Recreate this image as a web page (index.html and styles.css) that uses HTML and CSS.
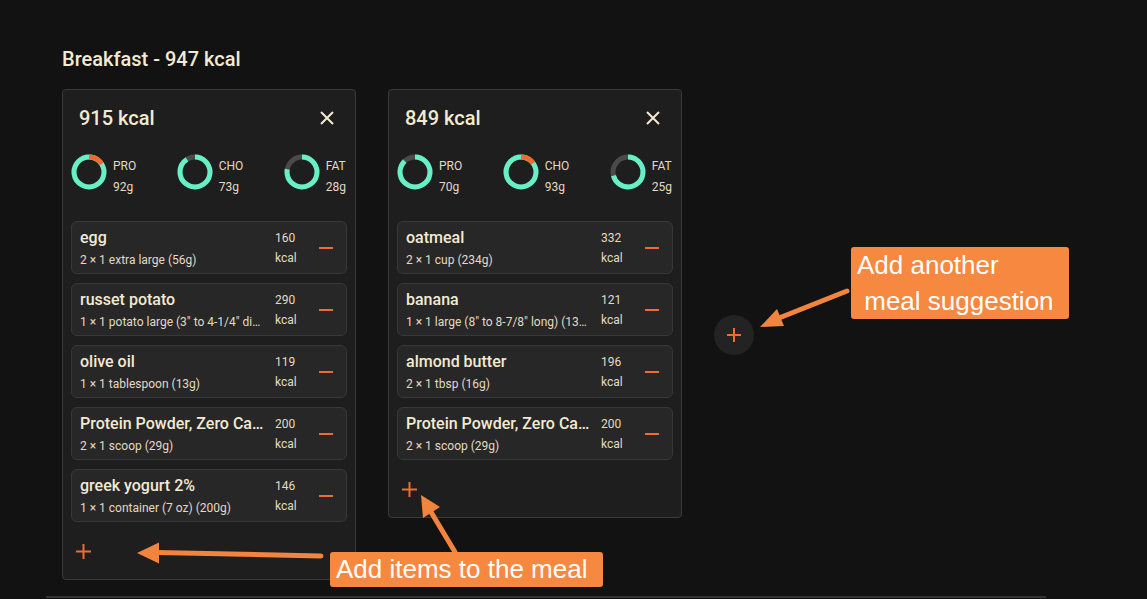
FILE: index.html
```html
<!DOCTYPE html>
<html lang="en">
<head>
    <meta charset="UTF-8">
    <meta name="viewport" content="width=device-width, initial-scale=1.0">
    <title>Meal Planner</title>
    <link rel="stylesheet" href="styles.css">
</head>
<body>
    <div class="page">
        <section class="meal-section">
            <h2 class="meal-title">Breakfast - 947 kcal</h2>

            <div class="suggestions">
                <!-- Suggestion 1 -->
                <div class="meal-card">
                    <div class="card-head">
                        <span class="card-kcal">915 kcal</span>
                        <button class="icon-btn" title="Remove suggestion">
                            <svg width="14" height="14" viewBox="0 0 14 14"><path d="M1 1L13 13M13 1L1 13" stroke="#f3ead3" stroke-width="2"/></svg>
                        </button>
                    </div>

                    <div class="macros">
                        <div class="macro">
                            <svg class="macro-ring" viewBox="0 0 36 36">
                                <circle class="ring-track" cx="18" cy="18" r="15" pathLength="100"/>
                                <circle class="ring-fill" cx="18" cy="18" r="15" pathLength="100" stroke-dasharray="100 100"/>
                                <circle class="ring-over" cx="18" cy="18" r="15" pathLength="100" stroke-dasharray="16 100"/>
                            </svg>
                            <div class="macro-text">PRO<br>92g</div>
                        </div>
                        <div class="macro">
                            <svg class="macro-ring" viewBox="0 0 36 36">
                                <circle class="ring-track" cx="18" cy="18" r="15" pathLength="100"/>
                                <circle class="ring-fill" cx="18" cy="18" r="15" pathLength="100" stroke-dasharray="91 100"/>
                            </svg>
                            <div class="macro-text">CHO<br>73g</div>
                        </div>
                        <div class="macro">
                            <svg class="macro-ring" viewBox="0 0 36 36">
                                <circle class="ring-track" cx="18" cy="18" r="15" pathLength="100"/>
                                <circle class="ring-fill" cx="18" cy="18" r="15" pathLength="100" stroke-dasharray="78 100"/>
                            </svg>
                            <div class="macro-text">FAT<br>28g</div>
                        </div>
                    </div>

                    <ul class="items">
                        <li class="item">
                            <div class="item-main">
                                <div class="item-name">egg</div>
                                <div class="item-amount">2 × 1 extra large (56g)</div>
                            </div>
                            <div class="item-kcal">160<br>kcal</div>
                            <button class="remove-btn"><span class="minus"></span></button>
                        </li>
                        <li class="item">
                            <div class="item-main">
                                <div class="item-name">russet potato</div>
                                <div class="item-amount">1 × 1 potato large (3" to 4-1/4" dia) (369g)</div>
                            </div>
                            <div class="item-kcal">290<br>kcal</div>
                            <button class="remove-btn"><span class="minus"></span></button>
                        </li>
                        <li class="item">
                            <div class="item-main">
                                <div class="item-name">olive oil</div>
                                <div class="item-amount">1 × 1 tablespoon (13g)</div>
                            </div>
                            <div class="item-kcal">119<br>kcal</div>
                            <button class="remove-btn"><span class="minus"></span></button>
                        </li>
                        <li class="item">
                            <div class="item-main">
                                <div class="item-name">Protein Powder, Zero Carb</div>
                                <div class="item-amount">2 × 1 scoop (29g)</div>
                            </div>
                            <div class="item-kcal">200<br>kcal</div>
                            <button class="remove-btn"><span class="minus"></span></button>
                        </li>
                        <li class="item">
                            <div class="item-main">
                                <div class="item-name">greek yogurt 2%</div>
                                <div class="item-amount">1 × 1 container (7 oz) (200g)</div>
                            </div>
                            <div class="item-kcal">146<br>kcal</div>
                            <button class="remove-btn"><span class="minus"></span></button>
                        </li>
                    </ul>

                    <button class="add-item" title="Add item">
                        <svg width="15" height="15" viewBox="0 0 15 15"><path d="M7.5 0V15M0 7.5H15" stroke="#f06a35" stroke-width="2"/></svg>
                    </button>
                </div>

                <!-- Suggestion 2 -->
                <div class="meal-card">
                    <div class="card-head">
                        <span class="card-kcal">849 kcal</span>
                        <button class="icon-btn" title="Remove suggestion">
                            <svg width="14" height="14" viewBox="0 0 14 14"><path d="M1 1L13 13M13 1L1 13" stroke="#f3ead3" stroke-width="2"/></svg>
                        </button>
                    </div>

                    <div class="macros">
                        <div class="macro">
                            <svg class="macro-ring" viewBox="0 0 36 36">
                                <circle class="ring-track" cx="18" cy="18" r="15" pathLength="100"/>
                                <circle class="ring-fill" cx="18" cy="18" r="15" pathLength="100" stroke-dasharray="88 100"/>
                            </svg>
                            <div class="macro-text">PRO<br>70g</div>
                        </div>
                        <div class="macro">
                            <svg class="macro-ring" viewBox="0 0 36 36">
                                <circle class="ring-track" cx="18" cy="18" r="15" pathLength="100"/>
                                <circle class="ring-fill" cx="18" cy="18" r="15" pathLength="100" stroke-dasharray="100 100"/>
                                <circle class="ring-over" cx="18" cy="18" r="15" pathLength="100" stroke-dasharray="15 100"/>
                            </svg>
                            <div class="macro-text">CHO<br>93g</div>
                        </div>
                        <div class="macro">
                            <svg class="macro-ring" viewBox="0 0 36 36">
                                <circle class="ring-track" cx="18" cy="18" r="15" pathLength="100"/>
                                <circle class="ring-fill" cx="18" cy="18" r="15" pathLength="100" stroke-dasharray="71 100"/>
                            </svg>
                            <div class="macro-text">FAT<br>25g</div>
                        </div>
                    </div>

                    <ul class="items">
                        <li class="item">
                            <div class="item-main">
                                <div class="item-name">oatmeal</div>
                                <div class="item-amount">2 × 1 cup (234g)</div>
                            </div>
                            <div class="item-kcal">332<br>kcal</div>
                            <button class="remove-btn"><span class="minus"></span></button>
                        </li>
                        <li class="item">
                            <div class="item-main">
                                <div class="item-name">banana</div>
                                <div class="item-amount">1 × 1 large (8" to 8-7/8" long) (136g)</div>
                            </div>
                            <div class="item-kcal">121<br>kcal</div>
                            <button class="remove-btn"><span class="minus"></span></button>
                        </li>
                        <li class="item">
                            <div class="item-main">
                                <div class="item-name">almond butter</div>
                                <div class="item-amount">2 × 1 tbsp (16g)</div>
                            </div>
                            <div class="item-kcal">196<br>kcal</div>
                            <button class="remove-btn"><span class="minus"></span></button>
                        </li>
                        <li class="item">
                            <div class="item-main">
                                <div class="item-name">Protein Powder, Zero Carb</div>
                                <div class="item-amount">2 × 1 scoop (29g)</div>
                            </div>
                            <div class="item-kcal">200<br>kcal</div>
                            <button class="remove-btn"><span class="minus"></span></button>
                        </li>
                    </ul>

                    <button class="add-item" title="Add item">
                        <svg width="15" height="15" viewBox="0 0 15 15"><path d="M7.5 0V15M0 7.5H15" stroke="#f06a35" stroke-width="2"/></svg>
                    </button>
                </div>

                <button class="add-meal" title="Add suggestion">
                    <svg width="14" height="14" viewBox="0 0 14 14"><path d="M7 0V14M0 7H14" stroke="#f06a35" stroke-width="2"/></svg>
                </button>
            </div>
        </section>

        <!-- Help annotations -->
        <svg class="arrows" width="1147" height="599" viewBox="0 0 1147 599">
            <g stroke="#f2843e" stroke-width="5" stroke-linecap="round" fill="#f2843e">
                <line x1="321" y1="556" x2="157" y2="552.5"/>
                <line x1="455" y1="552" x2="431" y2="512"/>
                <line x1="847" y1="291" x2="779" y2="318"/>
            </g>
            <g fill="#f2843e">
                <polygon points="137,553 159,542.5 159,563.5"/>
                <polygon points="421,495 440,507 423,518"/>
                <polygon points="760,327 777,309 784,326"/>
            </g>
        </svg>
        <div class="callout callout-meal">Add another<br>&nbsp;meal suggestion</div>
        <div class="callout callout-items">Add items to the meal</div>
    </div>
</body>
</html>
```

FILE: styles.css
```css
:root {
    --bg: #121212;
    --card-bg: #1e1e1e;
    --row-bg: #272727;
    --border: #3a3a3a;
    --text: #f3ead3;
    --text-dim: #e2dac5;
    --accent: #f06a35;
    --ring-ok: #66f0c6;
    --ring-track: #4a4a4a;
    --callout: #f7883f;
}

body {
    margin: 0;
    background: var(--bg);
    color: var(--text);
    font-family: Roboto, "Noto Sans", sans-serif;
    overflow: hidden;
}

button {
    font: inherit;
    color: inherit;
    background: none;
    border: none;
    padding: 0;
    cursor: pointer;
}

.page {
    position: relative;
    width: 1147px;
    height: 599px;
}

.meal-section {
    width: 1000px;
    margin-left: 46px;
    padding: 47px 16px 16px;
    box-sizing: border-box;
    border-bottom: 2px solid #333;
}

.meal-title {
    margin: 0 0 18px;
    font-size: 20px;
    font-weight: 500;
    line-height: 24px;
}

.suggestions {
    display: flex;
    align-items: flex-start;
    gap: 32px;
}

.meal-card {
    width: 294px;
    box-sizing: border-box;
    padding: 8px;
    background: var(--card-bg);
    border: 1px solid var(--border);
    border-radius: 4px;
}

.card-head {
    display: flex;
    align-items: center;
    justify-content: space-between;
    height: 40px;
    padding-left: 8px;
}

.card-kcal {
    font-size: 20px;
    font-weight: 500;
}

.icon-btn {
    width: 40px;
    height: 40px;
    display: flex;
    align-items: center;
    justify-content: center;
}

/* macro rings */
.macros {
    display: flex;
    justify-content: space-between;
    margin-top: 16px;
    padding: 0 1px 0 0;
}

.macro {
    display: flex;
    align-items: flex-start;
    gap: 6px;
}

.macro-ring {
    width: 36px;
    height: 36px;
    transform: rotate(-90deg);
}

.macro-ring circle {
    fill: none;
    stroke-width: 5;
}

.ring-track { stroke: var(--ring-track); }
.ring-fill { stroke: var(--ring-ok); }
.ring-over { stroke: var(--accent); }

.macro-text {
    font-size: 12px;
    line-height: 21px;
    padding-top: 2px;
    color: var(--text-dim);
}

/* food rows */
.items {
    list-style: none;
    margin: 23px 0 0;
    padding: 0;
    display: flex;
    flex-direction: column;
    gap: 9px;
}

.item {
    display: flex;
    height: 53px;
    box-sizing: border-box;
    padding: 6px 0 5px 8px;
    background: var(--row-bg);
    border: 1px solid #383838;
    border-radius: 6px;
}

.item-main {
    flex: 1;
    min-width: 0;
    margin-right: 10px;
}

.item-name,
.item-amount {
    white-space: nowrap;
    overflow: hidden;
    text-overflow: ellipsis;
}

.item-name {
    font-size: 16px;
    font-weight: 500;
    line-height: 20px;
}

.item-amount {
    margin-top: 4px;
    font-size: 12px;
    line-height: 16px;
    color: var(--text-dim);
}

.item-kcal {
    width: 31px;
    font-size: 12px;
    line-height: 20px;
    color: var(--text-dim);
}

.remove-btn {
    width: 40px;
    display: flex;
    align-items: center;
    justify-content: center;
}

.minus {
    width: 14px;
    height: 2px;
    background: var(--accent);
}

.add-item {
    width: 24px;
    height: 40px;
    margin-top: 9px;
    display: flex;
    align-items: center;
    justify-content: center;
}

.add-meal {
    align-self: center;
    width: 40px;
    height: 40px;
    border-radius: 50%;
    background: #232323;
    display: flex;
    align-items: center;
    justify-content: center;
}

/* help overlay */
.arrows {
    position: absolute;
    top: 0;
    left: 0;
    pointer-events: none;
}

.callout {
    position: absolute;
    box-sizing: border-box;
    padding-left: 6px;
    background: var(--callout);
    border-radius: 3px;
    color: #fff;
    font-family: "Liberation Sans", Arial, sans-serif;
    font-size: 26px;
}

.callout-meal {
    left: 851px;
    top: 247px;
    width: 218px;
    height: 72px;
    line-height: 36px;
}

.callout-items {
    left: 330px;
    top: 552px;
    width: 273px;
    height: 35px;
    line-height: 35px;
}
```
